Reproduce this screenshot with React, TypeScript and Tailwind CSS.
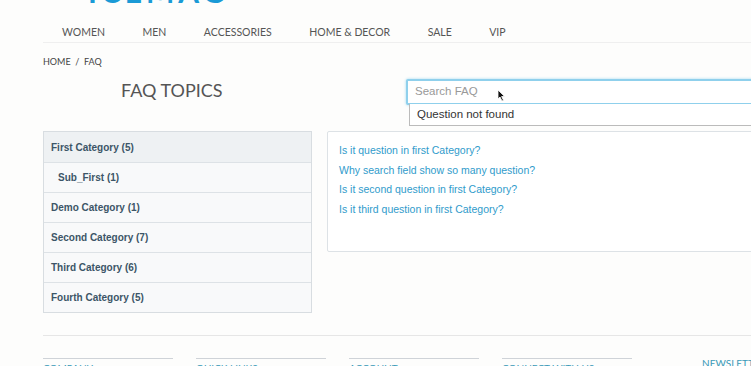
const nav = ["WOMEN", "MEN", "ACCESSORIES", "HOME & DECOR", "SALE", "VIP"];

const categories = [
  { name: "First Category (5)", active: true, sub: false },
  { name: "Sub_First (1)", active: false, sub: true },
  { name: "Demo Category (1)", active: false, sub: false },
  { name: "Second Category (7)", active: false, sub: false },
  { name: "Third Category (6)", active: false, sub: false },
  { name: "Fourth Category (5)", active: false, sub: false },
];

const questions = [
  "Is it question in first Category?",
  "Why search field show so many question?",
  "Is it second question in first Category?",
  "Is it third question in first Category?",
];

const footer = ["COMPANY", "QUICK LINKS", "ACCOUNT", "CONNECT WITH US"];

export default function App() {
  return (
    <div className="w-[751px] h-[366px] overflow-hidden bg-[#fdfdfc] font-['Lato',sans-serif]">
      <div className="w-[1100px]">
        {/* logo, mostly scrolled off the top */}
        <div className="h-[6px] overflow-hidden pl-[88px]">
          <div className="-mt-[24px] text-[30px] leading-[30px] font-bold tracking-[4px] text-[#1a9ad6]">
            ICEMAG
          </div>
        </div>

        <div className="ml-[43px]">
          <nav className="flex h-[37px] items-center gap-[37.5px] border-b border-[#efefef] pl-[19px] pt-[16px] text-[10.5px] text-[#555]">
            {nav.map((n) => (
              <span key={n} className="leading-none">{n}</span>
            ))}
          </nav>

          <div className="mt-[14px] text-[9px] leading-[10px] text-[#444]">
            HOME&nbsp;&nbsp;/&nbsp;&nbsp;FAQ
          </div>

          <div className="mt-[12px] flex h-[26px] items-start">
            <div className="w-[269px] pl-[78px] pt-[1px] text-[18px] leading-[20px] text-[#555]">
              FAQ TOPICS
            </div>
            <div className="relative ml-[94px] w-[420px]">
              <div className="flex h-[26px] items-center rounded-[2px] border-2 border-[#8fd0ec] bg-white pl-[7px] font-['Liberation_Sans',sans-serif] text-[11.5px] text-[#999] shadow-[0_0_3px_#9fd8f0]">
                Search FAQ
                <svg className="ml-[19px] mt-[6px]" width="9" height="13" viewBox="0 0 9 13">
                  <path d="M1 1 L1 10 L3 8 L5 12 L6.5 11.3 L4.6 7.5 L7.6 7.5 Z" fill="#111" stroke="#fff" strokeWidth="0.8" />
                </svg>
              </div>
              <div className="absolute left-[3px] top-[25px] flex h-[22px] w-full items-center border border-t-0 border-[#bbb] bg-white pl-[7px] font-['Liberation_Sans',sans-serif] text-[11.5px] text-[#333]">
                Question not found
              </div>
            </div>
          </div>

          <div className="mt-[26px] flex items-start gap-[15px] font-['Liberation_Sans',sans-serif]">
            <div className="w-[269px] border border-[#d8dde1]">
              {categories.map((c, i) => (
                <div
                  key={c.name}
                  className={`flex h-[30px] items-center text-[10px] font-bold text-[#3c5567] ${
                    i > 0 ? "border-t border-[#dde2e6]" : ""
                  } ${c.active ? "bg-[#eef1f3]" : "bg-[#f8f9fa]"} ${c.sub ? "pl-[14px]" : "pl-[7px]"}`}
                >
                  {c.name}
                </div>
              ))}
            </div>
            <div className="h-[121px] w-[500px] rounded-[2px] border border-[#dde2e6] bg-white pl-[11px] pt-[11px]">
              {questions.map((q) => (
                <div key={q} className="h-[19.5px] text-[10.5px] leading-[15px] text-[#2f9bcb]">
                  {q}
                </div>
              ))}
            </div>
          </div>

          <div className="mt-[22px] border-t border-[#e6e6e6]" />

          <div className="mt-[22px] flex items-start">
            {footer.map((f) => (
              <div key={f} className="mr-[23px] w-[130px] border-t border-[#cfd3d8] pt-[3px] text-[10px] leading-[12px] text-[#3a9ab8]">
                {f}
              </div>
            ))}
            <div className="ml-[47px] -mt-[1px] text-[10px] leading-[12px] text-[#3a9ab8]">NEWSLETTER</div>
          </div>
        </div>
      </div>
    </div>
  );
}
